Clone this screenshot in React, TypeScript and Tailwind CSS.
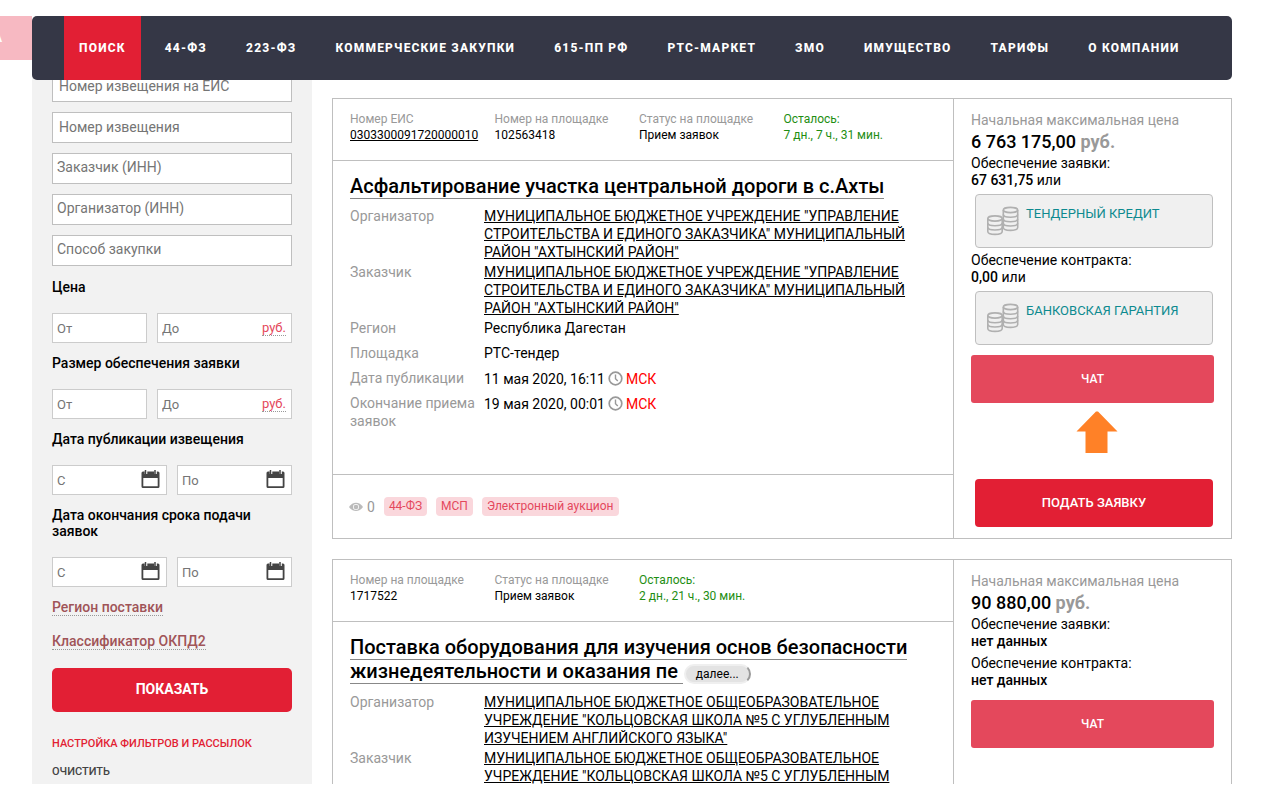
import type { ReactNode } from 'react';

const navItems = [
  'Поиск',
  '44-ФЗ',
  '223-ФЗ',
  'Коммерческие закупки',
  '615-ПП РФ',
  'РТС-Маркет',
  'ЗМО',
  'Имущество',
  'Тарифы',
  'О компании',
];

const textFilters = [
  { id: 'eis', label: 'Номер извещения на ЕИС', pad: 'pl-[6px] pb-[2px]' },
  { id: 'notice', label: 'Номер извещения', pad: 'pl-[6px] pb-[2px]' },
  { id: 'customer', label: 'Заказчик (ИНН)', pad: 'pl-1 pb-1' },
  { id: 'organizer', label: 'Организатор (ИНН)', pad: 'pl-1 pb-1' },
  { id: 'method', label: 'Способ закупки', pad: 'pl-1 pb-1' },
];

interface Meta {
  label: string;
  value: string;
  kind?: 'link' | 'left';
}

interface Guarantee {
  title: string;
  amount: string;
  offer?: string;
}

interface Tender {
  id: string;
  meta: Meta[];
  title: string;
  truncated?: boolean;
  organizer: string;
  customer: string;
  region: string;
  platform: string;
  published: string;
  deadline: string;
  tags: string[];
  price: string;
  guarantees: Guarantee[];
  canApply?: boolean;
}

const akhty =
  'МУНИЦИПАЛЬНОЕ БЮДЖЕТНОЕ УЧРЕЖДЕНИЕ "УПРАВЛЕНИЕ СТРОИТЕЛЬСТВА И ЕДИНОГО ЗАКАЗЧИКА" МУНИЦИПАЛЬНЫЙ РАЙОН "АХТЫНСКИЙ РАЙОН"';
const school =
  'МУНИЦИПАЛЬНОЕ БЮДЖЕТНОЕ ОБЩЕОБРАЗОВАТЕЛЬНОЕ УЧРЕЖДЕНИЕ "КОЛЬЦОВСКАЯ ШКОЛА №5 С УГЛУБЛЕННЫМ ИЗУЧЕНИЕМ АНГЛИЙСКОГО ЯЗЫКА"';

const tenders: Tender[] = [
  {
    id: '102563418',
    meta: [
      { label: 'Номер ЕИС', value: '0303300091720000010', kind: 'link' },
      { label: 'Номер на площадке', value: '102563418' },
      { label: 'Статус на площадке', value: 'Прием заявок' },
      { label: 'Осталось:', value: '7 дн., 7 ч., 31 мин.', kind: 'left' },
    ],
    title: 'Асфальтирование участка центральной дороги в с.Ахты',
    organizer: akhty,
    customer: akhty,
    region: 'Республика Дагестан',
    platform: 'РТС-тендер',
    published: '11 мая 2020, 16:11',
    deadline: '19 мая 2020, 00:01',
    tags: ['44-ФЗ', 'МСП', 'Электронный аукцион'],
    price: '6 763 175,00',
    guarantees: [
      { title: 'Обеспечение заявки:', amount: '67 631,75', offer: 'Тендерный кредит' },
      { title: 'Обеспечение контракта:', amount: '0,00', offer: 'Банковская гарантия' },
    ],
    canApply: true,
  },
  {
    id: '1717522',
    meta: [
      { label: 'Номер на площадке', value: '1717522' },
      { label: 'Статус на площадке', value: 'Прием заявок' },
      { label: 'Осталось:', value: '2 дн., 21 ч., 30 мин.', kind: 'left' },
    ],
    title: 'Поставка оборудования для изучения основ безопасности жизнедеятельности и оказания пе',
    truncated: true,
    organizer: school,
    customer: school,
    region: '',
    platform: '',
    published: '',
    deadline: '',
    tags: [],
    price: '90 880,00',
    guarantees: [
      { title: 'Обеспечение заявки:', amount: 'нет данных' },
      { title: 'Обеспечение контракта:', amount: 'нет данных' },
    ],
  },
];

function CalendarIcon() {
  return (
    <svg width="19" height="19" viewBox="0 0 19 19" aria-hidden="true">
      <path
        fill="#444"
        fillRule="evenodd"
        d="M2 1.500H17Q18.500 1.500 18.500 3V16.500Q18.500 18 17 18H2Q0.500 18 0.500 16.500V3Q0.500 1.500 2 1.500ZM2.300 8V16.200H16.700V8Z"
      />
      <path d="M5 0V4M14.500 0V4" stroke="#fff" strokeWidth="2.600" />
      <path d="M4.500 0V4M14 0V4" stroke="#444" strokeWidth="1.500" />
    </svg>
  );
}

function CoinsIcon() {
  return (
    <svg width="34" height="30" viewBox="0 0 34 30" fill="none" stroke="#b0b0b0" strokeWidth="1.600" aria-hidden="true">
      <ellipse cx="24.500" cy="4" rx="7.200" ry="2.600" />
      <path d="M17.300 4V21.500C17.300 25.300 31.700 25.300 31.700 21.500V4" />
      <path d="M17.300 8.500C17.300 12.100 31.700 12.100 31.700 8.500M17.300 13C17.300 16.600 31.700 16.600 31.700 13M17.300 17.300C17.300 20.900 31.700 20.900 31.700 17.300" />
      <ellipse cx="9" cy="12.500" rx="7.200" ry="2.600" />
      <path d="M1.800 12.500V25.500C1.800 29.300 16.200 29.300 16.200 25.500V12.500" />
      <path d="M1.800 17C1.800 20.600 16.200 20.600 16.200 17M1.800 21.300C1.800 24.900 16.200 24.900 16.200 21.300" />
    </svg>
  );
}

function ClockIcon() {
  return (
    <svg className="mx-[3px] inline-block align-[-2px]" width="15" height="15" viewBox="0 0 15 15" fill="none" stroke="#999" aria-hidden="true">
      <circle cx="7.500" cy="7.500" r="6.300" strokeWidth="1.700" />
      <path d="M7.500 3.500V7.700L9.800 10" strokeWidth="1.400" />
    </svg>
  );
}

function EyeIcon() {
  return (
    <svg width="14" height="10" viewBox="0 0 14 10" aria-hidden="true">
      <path d="M0 5C3.500-0.800 10.500-0.800 14 5C10.500 10.300 3.500 10.300 0 5Z" fill="#bbb" />
      <circle cx="7" cy="5" r="3" fill="#fff" />
      <circle cx="7" cy="5" r="2.300" fill="#bbb" />
    </svg>
  );
}

function FilterGroup({ title, children }: { title: string; children: ReactNode }) {
  return (
    <fieldset className="mb-3">
      <legend className="mb-[18px] text-sm leading-4 font-medium">{title}</legend>
      <div className="flex gap-[10px]">{children}</div>
    </fieldset>
  );
}

const smallInput =
  'block h-[30px] w-full border border-[#ccc] bg-white px-1 text-[13px] placeholder:text-[#757575]';

function PriceRange({ title }: { title: string }) {
  return (
    <FilterGroup title={title}>
      <input className={`${smallInput} max-w-[95px]`} placeholder="От" aria-label={`${title}: от`} />
      <div className="relative flex-1">
        <input className={smallInput} placeholder="До" aria-label={`${title}: до`} />
        <button className="absolute top-[7px] right-[6px] border-b border-dotted border-[#999] text-[13px] leading-[15px] text-[#e4485c]">
          руб.
        </button>
      </div>
    </FilterGroup>
  );
}

function DateRange({ title }: { title: string }) {
  return (
    <FilterGroup title={title}>
      {['С', 'По'].map(name => (
        <div key={name} className="relative flex-1">
          <input className={smallInput} placeholder={name} aria-label={`${title}: ${name}`} />
          <button className="absolute top-[5px] right-[7px]" aria-label={`${title}: календарь`}>
            <CalendarIcon />
          </button>
        </div>
      ))}
    </FilterGroup>
  );
}

function Sidebar() {
  return (
    <aside className="w-[280px] shrink-0 bg-[#f2f2f2] px-5">
      <form className="-mt-px" onSubmit={e => e.preventDefault()}>
        <div className="mb-[13px] flex flex-col gap-[10px]">
          {textFilters.map(filter => (
            <input
              key={filter.id}
              id={filter.id}
              aria-label={filter.label}
              placeholder={filter.label}
              className={`h-[31px] w-full border border-[#bfbfbf] bg-white text-sm placeholder:text-[#757575] ${filter.pad}`}
            />
          ))}
        </div>
        <PriceRange title="Цена" />
        <PriceRange title="Размер обеспечения заявки" />
        <DateRange title="Дата публикации извещения" />
        <DateRange title="Дата окончания срока подачи заявок" />
        <div className="flex flex-col items-start gap-[17px] text-sm leading-4 font-medium text-[#a05458]">
          <button className="border-b border-dotted border-[#999]">Регион поставки</button>
          <button className="border-b border-dotted border-[#999]">Классификатор ОКПД2</button>
        </div>
        <button className="mt-[18px] h-11 w-full rounded-[5px] bg-[#e21f34] pb-[2px] text-sm font-bold text-white uppercase">
          Показать
        </button>
        <div className="mt-6 flex flex-col items-start gap-3 text-[11px] leading-4 font-medium uppercase">
          <a href="#settings" className="text-[#e21f34]">Настройка фильтров и рассылок</a>
          <button className="text-[#444] uppercase">Очистить</button>
        </div>
      </form>
    </aside>
  );
}

function Row({ label, children }: { label: string; children: ReactNode }) {
  return (
    <div className="flex min-h-[23px]">
      <dt className="w-[134px] shrink-0 pr-1 text-[#999]">{label}</dt>
      <dd className="flex-1">{children}</dd>
    </div>
  );
}

function DateValue({ value }: { value: string }) {
  return (
    <div className="pt-px">
      {value}
      <ClockIcon />
      <span className="text-[#f00]">МСК</span>
    </div>
  );
}

function TenderCard({ tender }: { tender: Tender }) {
  return (
    <article className="flex border border-[#bfbfbf]">
      <div className="flex min-w-0 flex-1 flex-col">
        <div className="grid h-[62px] grid-cols-4 border-b border-[#bfbfbf] pt-3 pr-[25px] pl-[17px] text-xs leading-4">
          {tender.meta.map(item => (
            <div key={item.label} className={item.kind === 'left' ? 'text-[#1e8e12]' : ''}>
              <div className={item.kind === 'left' ? '' : 'text-[#999]'}>{item.label}</div>
              {item.kind === 'link' ? <a href="#eis" className="underline">{item.value}</a> : item.value}
            </div>
          ))}
        </div>
        <div className="flex-1 px-[17px] pt-[13px] pb-[43px]">
          <h2 className="mb-[9px] text-xl leading-6 font-medium">
            <a href={`#${tender.id}`} className="border-b border-[#888]">
              {tender.title}
              {tender.truncated && '\u00a0'}
            </a>
            {tender.truncated && (
              <button className="ml-px h-5 rounded-[10px] border-2 border-[#efefef] border-r-[#999] bg-[#e3e3e3] px-[10px] align-baseline text-xs leading-4 font-normal">
                далее...
              </button>
            )}
          </h2>
          <dl className="flex flex-col gap-[2px] text-sm leading-[18px]">
            <Row label="Организатор"><a href="#organizer" className="underline">{tender.organizer}</a></Row>
            <Row label="Заказчик"><a href="#customer" className="underline">{tender.customer}</a></Row>
            {tender.region && <Row label="Регион">{tender.region}</Row>}
            {tender.platform && <Row label="Площадка">{tender.platform}</Row>}
            {tender.published && <Row label="Дата публикации"><DateValue value={tender.published} /></Row>}
            {tender.deadline && <Row label="Окончание приема заявок"><DateValue value={tender.deadline} /></Row>}
          </dl>
        </div>
        {tender.tags.length > 0 && (
          <div className="flex h-16 items-center gap-[9px] border-t border-[#bfbfbf] pr-[17px] pl-4 text-xs">
            <span className="flex items-center gap-1 text-sm text-[#999]">
              <EyeIcon />0
            </span>
            {tender.tags.map(tag => (
              <span key={tag} className="h-[19px] rounded bg-[#fad7dc] px-[5px] leading-[18px] text-[#e4485c]">
                {tag}
              </span>
            ))}
          </div>
        )}
      </div>

      <div className="w-[278px] shrink-0 border-l border-[#bfbfbf] px-[17px] pt-3 pb-[11px] text-sm leading-[17px]">
        <div className="leading-[18px] text-[#999]">Начальная максимальная цена</div>
        <div className="my-[2px] text-lg leading-[22px] font-medium">
          {tender.price} <span className="font-bold text-[#999]">руб.</span>
        </div>
        {tender.guarantees.map(item => (
          <div key={item.title} className={item.offer ? 'mb-1' : 'mb-[5px]'}>
            <div>{item.title}</div>
            <div>
              <b className="font-medium">{item.amount}</b>
              {item.offer && ' или'}
            </div>
            {item.offer && (
              <a
                href="#offer"
                className="mx-1 mt-[5px] flex h-[54px] w-[238px] gap-[6px] rounded border border-[#bfbfbf] bg-[#f0f0f0] pt-[11px] pl-[10px] text-[13px] leading-4 text-[#0d8a8f] uppercase"
              >
                <CoinsIcon />
                {item.offer}
              </a>
            )}
          </div>
        ))}
        <button className="mt-[6px] h-12 w-full rounded-[3px] bg-[#e4485c] text-xs font-medium text-white uppercase">
          Чат
        </button>
        {tender.canApply && (
          <>
            <svg className="mt-2 mb-[26px] ml-[105px] block" width="42" height="42" viewBox="0 0 42 42" aria-hidden="true">
              <path d="M20 0.500H22L41.500 20.500H31.500V42H9.500V20.500H0.500Z" fill="#ff8127" />
            </svg>
            <button className="mx-1 h-12 w-[238px] rounded bg-[#e21f34] pb-[2px] text-[13px] font-medium text-white uppercase">
              Подать заявку
            </button>
          </>
        )}
      </div>
    </article>
  );
}

export default function App() {
  return (
    <div className="flex h-screen overflow-hidden bg-white py-4 pr-12 font-['Roboto','Liberation_Sans',sans-serif] text-black">
      <div className="flex h-11 w-8 shrink-0 items-center justify-end overflow-hidden bg-[#f7b9c2] pr-[30px] text-xs font-bold whitespace-nowrap text-white">
        ЗАЯВКА
      </div>
      <div className="flex min-w-0 flex-1 flex-col">
        <header className="relative z-10 shrink-0 rounded-[5px] bg-[#353746] px-8">
          <nav className="flex gap-[9px]">
            {navItems.map((item, i) => (
              <a
                key={item}
                href="#nav"
                className={`flex h-16 items-center px-[15px] text-xs font-extrabold tracking-widest whitespace-nowrap text-white uppercase ${
                  i === 0 ? 'bg-[#e21f34]' : ''
                }`}
              >
                {item}
              </a>
            ))}
          </nav>
        </header>
        <div className="-mt-2 flex min-h-0 flex-1 gap-5 overflow-hidden">
          <Sidebar />
          <main className="flex min-w-0 flex-1 flex-col gap-5 pt-[26px]">
            {tenders.map(tender => (
              <div key={tender.id} className="shrink-0">
                <TenderCard tender={tender} />
              </div>
            ))}
          </main>
        </div>
      </div>
    </div>
  );
}
